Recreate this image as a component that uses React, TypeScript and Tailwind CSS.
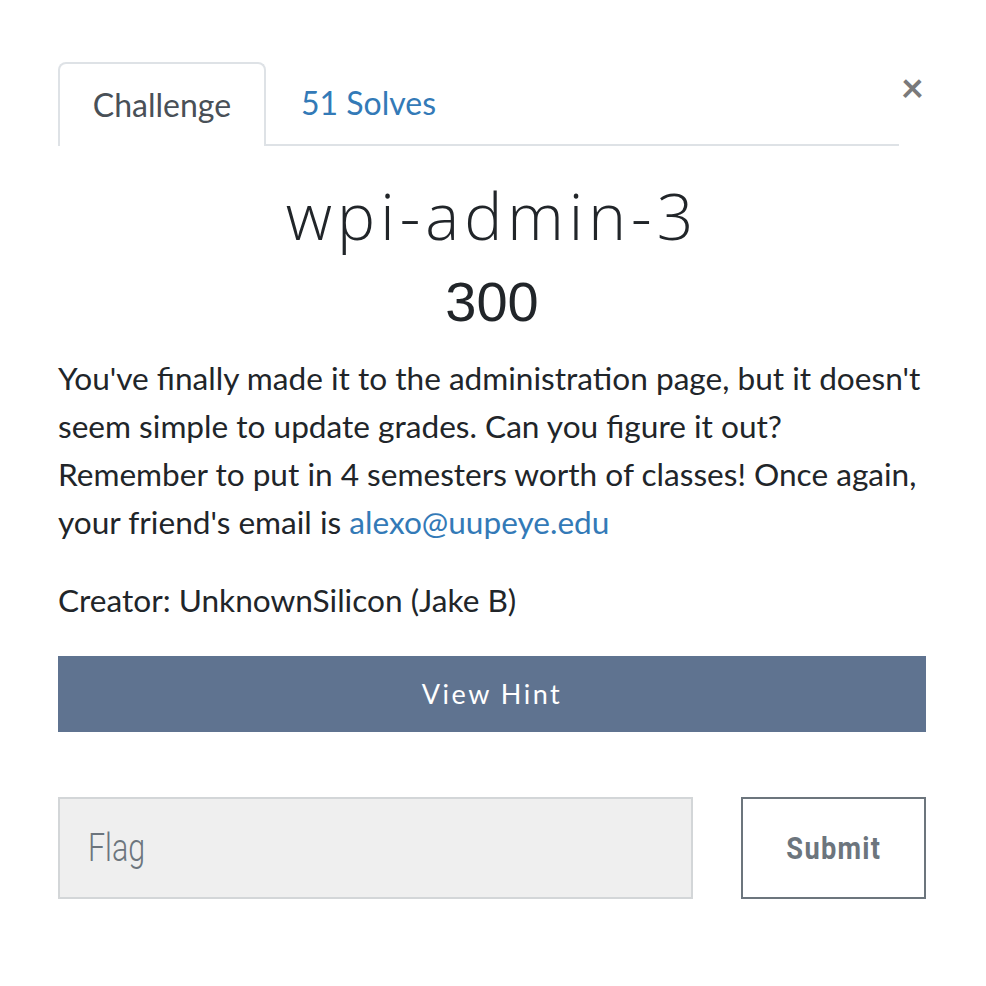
import React from "react";

export default function App() {
  return (
    <div className="w-[986px] h-[986px] bg-white" style={{ fontFamily: "Lato, 'Liberation Sans', sans-serif" }}>
      <div className="pl-[58px] pr-[60px] pt-[62px]">
        <div className="flex items-start">
          <div className="flex-1 flex border-b-2 border-[#dee2e6] mr-[2px]">
            <div className="w-[208px] h-[84px] -mb-[2px] border-2 border-b-0 border-[#dee2e6] rounded-t-[8px] bg-white flex items-center justify-center text-[32px] text-[#495057]">
              Challenge
            </div>
            <div className="pl-[35px] h-[82px] flex items-center text-[32px] text-[#337ab7]">51 Solves</div>
          </div>
          <div className="text-[40px] leading-none font-bold text-[#7a7a7a] mt-[5px] mr-[2px]">×</div>
        </div>
        <div className="text-center text-[64px] leading-none text-[#212529] mt-[38px] tracking-[5px] font-light" style={{ fontFamily: "'Open Sans', sans-serif" }}>
          wpi-admin-3
        </div>
        <div className="text-center text-[56px] leading-none text-[#212529] mt-[26px]" style={{ fontFamily: "'Liberation Sans', sans-serif" }}>
          300
        </div>
        <p className="mt-[24px] text-[31.6px] leading-[48px] text-[#212529] w-[868px]">
          You've finally made it to the administration page, but it doesn't seem simple to update grades. Can you figure it out? Remember to put in 4 semesters worth of classes! Once again, your friend's email is <a className="text-[#337ab7]">alexo@uupeye.edu</a>
        </p>
        <div className="mt-[30px] text-[31.6px] leading-[48px] text-[#212529]">Creator: UnknownSilicon (Jake B)</div>
        <div className="mt-[32px] h-[76px] bg-[#5f7390] flex items-center justify-center text-white text-[27px] tracking-[2.5px]">
          View Hint
        </div>
        <div className="mt-[65px] flex gap-[48px]">
          <div className="w-[635px] h-[102px] bg-[#efefef] border-2 border-[#d3d6d8] flex items-center pl-[28px] text-[38px] text-[#6c757d]" style={{ fontFamily: "Roboto, sans-serif" }}>
            <span className="scale-x-[0.8] origin-left inline-block font-light">Flag</span>
          </div>
          <div className="w-[185px] h-[102px] border-2 border-[#6c757d] flex items-center justify-center text-[32px] font-bold text-[#6c757d] tracking-[1.5px]" style={{ fontFamily: "Roboto, sans-serif" }}>
            <span className="scale-x-[0.85] inline-block">Submit</span>
          </div>
        </div>
      </div>
    </div>
  );
}
